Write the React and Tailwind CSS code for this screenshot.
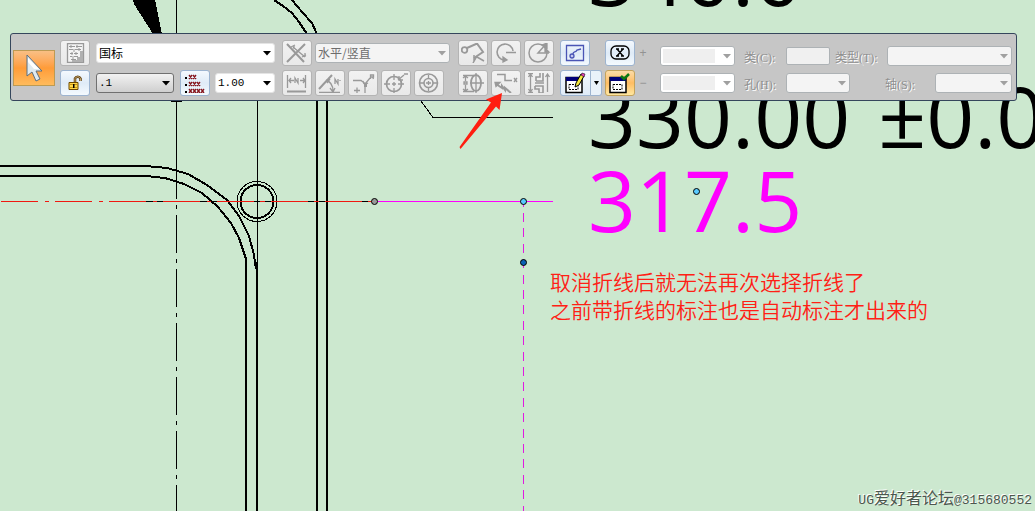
import React, { useState } from "react";

const cjk = "font-['Noto_Sans_CJK_SC',sans-serif]";

// one set of strokes per toolbar button, drawn on a 24x20 grid
function Icon({ children, color = "#999999" }) {
  return (
    <svg
      width="24"
      height="20"
      viewBox="0 0 24 20"
      fill="none"
      stroke={color}
      strokeWidth="1.3"
      aria-hidden="true"
    >
      {children}
    </svg>
  );
}

function ToolButton({ label, disabled, active, children }) {
  let look =
    "border-[#9db4d0] bg-linear-to-b from-[#f4f9fe] via-[#dfebf7] to-[#f4fafe]";
  if (disabled) {
    look = "border-[#b4b4b4] bg-linear-to-b from-[#f2f2f2] to-[#e9e9e9]";
  }
  if (active) {
    look =
      "border-[#c4a35c] bg-linear-to-b from-[#fbdca8] via-[#ffbd62] to-[#ffe7a0]";
  }
  return (
    <button
      type="button"
      aria-label={label}
      disabled={disabled}
      className={`flex h-[26px] w-[30px] shrink-0 items-center justify-center rounded-[3px] border ${look}`}
    >
      {children}
    </button>
  );
}

function Dropdown({ label, options = [""], disabled, filled, className, text }) {
  const [value, setValue] = useState(options[0]);
  let look = "border-[#e4e4e4] bg-white text-black";
  if (filled) {
    look =
      "border-[#707070] bg-linear-to-b from-[#f2f2f2] to-[#cfcfcf] text-black";
  }
  if (disabled) {
    look = "border-[#adb2b5] bg-[#f4f4f4] text-[#6d6d6d]";
  }
  return (
    <div className={`relative h-5 ${className}`}>
      <select
        aria-label={label}
        disabled={disabled}
        value={value}
        onChange={(e) => setValue(e.target.value)}
        className={`block h-full w-full appearance-none rounded-[3px] border pr-4 pl-0.5 opacity-100 ${look} ${text || ""}`}
      >
        {options.map((option) => (
          <option key={option}>{option}</option>
        ))}
      </select>
      <svg
        className="pointer-events-none absolute top-2 right-1"
        width="8"
        height="5"
        viewBox="0 0 8 5"
        fill={disabled ? "#a0a0a0" : "#000000"}
        aria-hidden="true"
      >
        <path d="M0 0h8L4 4.500z" />
      </svg>
    </div>
  );
}

// editable combo: grey entry inside a white frame
function ComboEntry({ label }) {
  return (
    <div className="flex h-5 w-[75px] items-center rounded-[3px] border border-[#adb2b5] bg-white pl-0.5">
      <input
        type="text"
        aria-label={label}
        disabled
        className="h-3.5 w-[52px] bg-[#efefef]"
      />
      <svg
        className="ml-2"
        width="8"
        height="5"
        viewBox="0 0 8 5"
        fill="#a0a0a0"
        aria-hidden="true"
      >
        <path d="M0 0h8L4 4.500z" />
      </svg>
    </div>
  );
}

function FieldLabel({ children }) {
  return (
    <span className="shrink-0 font-['Liberation_Serif','Noto_Sans_CJK_SC',serif] text-xs text-[#8f8f8f] [text-shadow:1px_1px_0_#ffffff]">
      {children}
    </span>
  );
}

function Drawing() {
  return (
    <svg
      className="absolute inset-0 h-full w-full"
      fill="none"
      stroke="#000000"
      shapeRendering="crispEdges"
      aria-hidden="true"
    >
      {/* arrow head and centre line */}
      <path d="M133 0h22l7 34h-9L134 4z" fill="#000000" stroke="none" />
      <path d="M176.500 0V199M176.500 205v4M171 101.500h11" />
      <path d="M176.500 215V2000" strokeDasharray="38 6 4 6" />
      <path d="M257.500 101V262" />

      {/* inner profile */}
      <g strokeWidth="2">
        <path d="M0 166H146L167 168L188 174L207 185L227 200L239 216L249 236L254 255L256 269" />
        <path d="M0 176H146L165 178L184 184L202 193L218 207L231 223L239 238L244 253L246 259V2000" />
        <path d="M257 262V2000" />
        <path d="M274 0L283 6L292 13L299 22L307 34M292 0L303 13L312 23L317 34" />
        <path d="M317 100V2000M327 100V2000" />
        <circle cx="257" cy="201.500" r="16.500" />
      </g>
      <circle cx="257" cy="201.500" r="20" />

      {/* horizontal axis */}
      <g stroke="#f01810">
        <path d="M1 201.500H109" strokeDasharray="37 7 4 6" />
        <path d="M109 201.500H372" />
      </g>
      <path d="M146 201.500h7M157 201.500h6M200 201.500h7M211 201.500h6M254 201.500h6M265 201.500h6M308 201.500h6M319 201.500h6M362 201.500h6" />

      {/* dimension lines */}
      <path d="M421 101L433 117.500H553" />
      <path d="M378 201.500H553" stroke="#ff00ff" />
      <path
        d="M523.500 213V2000"
        stroke="#e01be0"
        strokeDasharray="9 6.400"
      />
      <path d="M523.500 204v3M523.500 265v3" stroke="#e01be0" />
      <g shapeRendering="auto">
        <circle cx="374.500" cy="201.500" r="3" fill="#999999" />
        <circle cx="523.500" cy="201.500" r="3" fill="#59cbff" />
        <circle cx="523.500" cy="262.500" r="3" fill="#0a60b4" />
      </g>
    </svg>
  );
}

function Dimensions() {
  return (
    <div className="font-['Century_Gothic','Open_Sans',sans-serif] text-[84px] leading-[84px] whitespace-nowrap text-black">
      <div className="absolute top-[-68px] left-[588px]">340.0</div>
      <div className="absolute top-[74px] left-[588px] flex gap-7">
        <span>330.00</span>
        <span>±0.0</span>
      </div>
      <div className="absolute top-[158px] left-[588px] text-[#ff00ff]">
        317.5
      </div>
      <svg
        className="absolute top-[187px] left-[692px]"
        width="9"
        height="9"
        aria-hidden="true"
      >
        <circle cx="4.500" cy="4.500" r="3" fill="#59cbff" stroke="#000000" />
      </svg>
    </div>
  );
}

function Toolbar() {
  return (
    <div
      role="toolbar"
      aria-label="尺寸"
      className="relative flex items-center rounded-[3px] border border-[#35465c] bg-[#c6c6c6] pt-1.5 pr-1 pb-1 pl-0.5"
    >
      <button
        type="button"
        aria-label="选择"
        className="flex h-9 w-[42px] shrink-0 items-center justify-center border border-[#bd9a52] bg-linear-to-b from-[#f9bf84] via-[#ff9c38] to-[#ffbb5c]"
      >
        <svg width="18" height="28" viewBox="0 0 18 28" aria-hidden="true">
          <path
            d="M2 1v21l5-4 4 9 4-2-4-8h6z"
            fill="#dfeaf0"
            stroke="#5b6f80"
          />
          <path d="M3 4l11 11H9L3 8z" fill="#ffffff" />
        </svg>
      </button>

      <div className="ml-[5px] flex flex-col gap-1">
        <ToolButton label="样式" disabled>
          <Icon>
            <path d="M4.500.5h16v19h-16z" fill="#f4f4f4" />
            <path d="M17 8h3v11H9v-2h5v-3h3z" fill="#b0b0b0" stroke="none" />
            <path
              d="M6 3.500h6m1 0h6M6 6.500h4m2 0h6M7 10.500h3m1 0h4M7 13.500h2m2 0h4M8 16.500h5M8 2v3m6-3v3m-3 1v3m5-4v3M9 9v3m4-3v3m-3 1v4"
              strokeWidth="1"
            />
          </Icon>
        </ToolButton>
        <ToolButton label="解锁">
          <svg width="14" height="18" viewBox="0 0 14 18" aria-hidden="true">
            <path
              d="M7 8V4.500a3 3 0 0 1 5.500 0V7"
              fill="none"
              stroke="#5f3a05"
              strokeWidth="2.500"
            />
            <path
              d="M7 8V4.500a3 3 0 0 1 5.500 0V7"
              fill="none"
              stroke="#d9c48f"
              strokeWidth="0.800"
            />
            <path d="M1 8.500h9v7H1z" fill="#ffd84a" stroke="#6e4800" />
            <path d="M2 10.500h7M2 13.500h7" stroke="#c99512" />
            <path d="M5 10h1.500v4H5z" fill="#000000" />
          </svg>
        </ToolButton>
      </div>

      <div className="ml-1.5 flex w-[179px] shrink-0 flex-col gap-1">
        <div className="flex h-[26px] items-center">
          <Dropdown
            label="标准"
            options={["国标", "ISO", "ANSI"]}
            className="w-full"
            text={`${cjk} text-xs`}
          />
        </div>
        <div className="flex h-[26px] items-center justify-between">
          <Dropdown
            label="圆整"
            options={[".1", ".12", ".123"]}
            filled
            className="w-[78px]"
            text="font-['Liberation_Mono',monospace] text-[11px]"
          />
          <ToolButton label="精度">
            <svg
              width="22"
              height="20"
              viewBox="0 0 22 20"
              fill="none"
              aria-hidden="true"
            >
              <path
                d="M1 4h2v2H1zM1 11h2v2H1zM1 18h2v2H1z"
                fill="#000000"
              />
              <path
                d="M5 2l3 4m0-4l-3 4M9 2l3 4m0-4l-3 4M5 9l3 4m0-4l-3 4M9 9l3 4m0-4l-3 4M13 9l3 4m0-4l-3 4M5 16l3 4m0-4l-3 4M9 16l3 4m0-4l-3 4M13 16l3 4m0-4l-3 4M17 16l3 4m0-4l-3 4"
                stroke="#86141c"
                strokeWidth="1.300"
              />
            </svg>
          </ToolButton>
          <Dropdown
            label="比例"
            options={["1.00", "2.00"]}
            className="w-[60px]"
            text="font-['Liberation_Mono',monospace] text-[11px]"
          />
        </div>
      </div>

      <div className="ml-[7px] flex w-[168px] shrink-0 flex-col gap-1">
        <div className="flex items-center gap-[3px]">
          <ToolButton label="两点" disabled>
            <Icon>
              <path d="M2 1l17 18M2 19L20 1" strokeWidth="2" />
              <path d="M8 4l12 10M6 4l4-2M17 14l4-2M9 2v4M20 10v4" />
            </Icon>
          </ToolButton>
          <Dropdown
            label="方向"
            options={["水平/竖直"]}
            disabled
            className="flex-1"
            text={`${cjk} text-xs`}
          />
        </div>
        <div className="flex gap-[3px]">
          <ToolButton label="间距" disabled>
            <Icon>
              <path d="M2.500 2v13M20.500 2v13M4 7.500h5m6 0h5M6 5L4 7.500 6 10M18 5l2 2.500L18 10" />
              <path d="M10 10V5l3 5V5" />
              <path d="M2 18.500h19" strokeWidth="2" />
            </Icon>
          </ToolButton>
          <ToolButton label="角度" disabled>
            <Icon>
              <path d="M1 16L14 2" strokeWidth="2" />
              <path d="M1 19.500h21M8 7.500c5 1 7 5 7 11M8 7.500l4-1M9 10l3-4M12 15l3 4 2-4M17 11V6l3 5V6M22 7v1" />
            </Icon>
          </ToolButton>
          <ToolButton label="坐标尺寸" disabled>
            <Icon>
              <path d="M2 7.500h8l4 3M14 20v-9l5-6M3 17.500h6M6 14.500v6M13 11l-1-3M15 11l2-1" />
              <path d="M13 10h3v4h-3z" fill="#999999" stroke="none" />
              <path d="M19.500 6V2h3v2h-3m2 0l1 2" />
            </Icon>
          </ToolButton>
          <ToolButton label="直径" disabled>
            <Icon>
              <circle cx="10" cy="11" r="7.500" strokeWidth="1.700" />
              <path d="M0 11h6m2 0h4m2 0h6M10 1v6m0 2v4m0 2v5M14 7l6-5M15 3v4h4M20 1h4" />
            </Icon>
          </ToolButton>
          <ToolButton label="同心" disabled>
            <Icon>
              <circle cx="11.500" cy="10" r="9" strokeWidth="1.600" />
              <circle cx="11.500" cy="10" r="4.500" strokeWidth="1.600" />
              <path d="M3 10h4m2 0h5m2 0h4M11.500 2v4m0 2v4m0 2v4" />
            </Icon>
          </ToolButton>
        </div>
      </div>

      <div className="ml-2 grid shrink-0 grid-cols-3 gap-x-[3px] gap-y-1">
        <ToolButton label="引线" disabled>
          <Icon>
            <circle cx="3.500" cy="7" r="2.800" strokeWidth="1.800" />
            <path d="M6 5l10-4.500L22 9l-9 6" strokeWidth="2" />
            <path d="M16 13l-4 7M13 12v6M16 14l7 4" strokeWidth="1.500" />
          </Icon>
        </ToolButton>
        <ToolButton label="圆弧" disabled>
          <Icon>
            <path d="M22 9.500H12M19 8a8 8 0 1 0-9 9" strokeWidth="1.600" />
            <path d="M9 14l4 3-4 2z" fill="#999999" />
          </Icon>
        </ToolButton>
        <ToolButton label="半径" disabled>
          <Icon>
            <circle cx="11" cy="10" r="9" strokeWidth="1.500" />
            <path d="M22 10H11L19 1" strokeWidth="1.500" />
            <path d="M15 2l5-2v5zM18 5l4 4h-4z" fill="#999999" />
          </Icon>
        </ToolButton>
        <ToolButton label="对称直径" disabled>
          <Icon>
            <ellipse cx="15" cy="10" rx="5" ry="8" strokeWidth="1.800" />
            <path d="M2 2.500h11M2 18.500h11M9 10h14M15 0v20M4.500 3v5M4.500 12v6M2 5l2.500-2L7 5M2 16l2.500 2L7 16M3 9h3v2H3z" />
          </Icon>
        </ToolButton>
        <ToolButton label="折线" disabled>
          <Icon>
            <path d="M3 1.500h8v6h7" strokeWidth="1.500" />
            <path d="M20 5l3 4m0-4l-3 4" />
            <path d="M2 11l6 4v-2l3 4v-2l6 5" strokeWidth="2" />
            <path d="M1 9.500h5l-4 4z" fill="#999999" />
          </Icon>
        </ToolButton>
        <ToolButton label="尺寸边界" disabled>
          <Icon>
            <path d="M1 .5h5M1 19.500h5M3.500 1v18M1.500 4l2-3 2 3M1.500 16l2 3 2-3M8 10h9M20.500 1v18M18.500 4l2-3 2 3" />
            <path d="M9 8V4h4V0M16 0v8H9M8 13h8v7M8 13v3h4v4h4" strokeWidth="1.600" />
          </Icon>
        </ToolButton>
      </div>

      <div className="ml-1.5 flex w-[42px] shrink-0 flex-col gap-1">
        <ToolButton label="附着">
          <Icon color="#4a55b5">
            <path d="M3.500 2.500h17v15h-17z" />
            <circle cx="9" cy="13" r="2" fill="#c4c8f0" />
            <path d="M10 11c0-3 3-1 4-4l4-1" />
          </Icon>
        </ToolButton>
        <div className="flex">
          <button
            type="button"
            aria-label="前缀"
            className="flex h-[26px] w-[31px] items-center justify-center rounded-l-[3px] border border-[#9db4d0] bg-linear-to-b from-[#f4f9fe] to-[#dfebf7]"
          >
            <svg
              width="22"
              height="22"
              viewBox="0 0 22 22"
              fill="none"
              aria-hidden="true"
            >
              <path d="M1 5.500h16v15H1z" fill="#ffffff" stroke="#000000" strokeWidth="1.500" />
              <path d="M1 5h16v4H1z" fill="#000078" />
              <path d="M4 12.500h9v5H4z" stroke="#000000" strokeDasharray="2 1" />
              <path d="M10 15l1-4 5-9 3 2-5 9z" fill="#f5e83c" stroke="#000000" />
              <path d="M16 3l1-2 3 1-1 3z" fill="#e040b0" stroke="#000000" strokeWidth="0.500" />
            </svg>
          </button>
          <button
            type="button"
            aria-label="更多前缀"
            className="flex h-[26px] w-[11px] items-center justify-center rounded-r-[3px] border border-l-0 border-[#9db4d0] bg-[#e9f2fa]"
          >
            <svg width="5" height="4" viewBox="0 0 5 4" aria-hidden="true">
              <path d="M0 0h5L2.500 4z" />
            </svg>
          </button>
        </div>
      </div>

      <div className="ml-[3px] flex flex-col gap-1">
        <ToolButton label="公差">
          <Icon color="#000000">
            <rect x="3" y="3" width="18" height="13" rx="5" />
            <path d="M9 6l6 7m0-7l-6 7M8 6h3m2 0h3M8 13h3m2 0h3" />
          </Icon>
        </ToolButton>
        <ToolButton label="检验" active>
          <svg
            width="22"
            height="22"
            viewBox="0 0 22 22"
            fill="none"
            aria-hidden="true"
          >
            <path d="M1 5.500h16v15H1z" fill="#ffffff" stroke="#000000" strokeWidth="1.500" />
            <path d="M1 5h16v4H1z" fill="#000078" />
            <path d="M4 12.500h9v5H4z" stroke="#000000" strokeDasharray="2 1" />
            <path d="M12 4l3 3 5-5" stroke="#0a7a12" strokeWidth="2.500" />
          </svg>
        </ToolButton>
      </div>

      <div className="ml-1 flex w-2 shrink-0 flex-col gap-1 text-center font-['Liberation_Sans',sans-serif] text-xs leading-[26px] text-[#929292]">
        <span>+</span>
        <span>−</span>
      </div>

      <div className="ml-[13px] flex flex-col gap-[7px] pt-[3px]">
        <ComboEntry label="上偏差" />
        <ComboEntry label="下偏差" />
      </div>

      <div className="ml-[9px] flex min-w-0 flex-1 flex-col gap-[7px] pt-[3px]">
        <div className="flex h-5 items-center">
          <label className="flex items-center">
            <span className="w-[42px]">
              <FieldLabel>类(C):</FieldLabel>
            </span>
            <input
              type="text"
              disabled
              className="h-[18px] w-11 rounded-[2px] border border-[#adb2b5] bg-[#f0f0f0]"
            />
          </label>
          <label className="ml-[5px] flex min-w-0 flex-1 items-center">
            <span className="w-[52px] shrink-0">
              <FieldLabel>类型(T):</FieldLabel>
            </span>
            <Dropdown disabled className="min-w-0 flex-1" />
          </label>
        </div>
        <div className="flex h-5 items-center justify-between">
          <label className="flex items-center">
            <span className="w-[42px]">
              <FieldLabel>孔(H):</FieldLabel>
            </span>
            <Dropdown disabled className="w-16" />
          </label>
          <label className="flex items-center">
            <span className="w-[50px]">
              <FieldLabel>轴(S):</FieldLabel>
            </span>
            <Dropdown disabled className="w-[77px]" />
          </label>
        </div>
      </div>
    </div>
  );
}

function App() {
  return (
    <main className="relative min-h-screen overflow-hidden bg-[#cce8cf] pt-[33px] pr-[18px] pl-[10px]">
      <Drawing />
      <Dimensions />
      <Toolbar />

      <svg
        className="pointer-events-none absolute top-[92px] left-[458px]"
        width="46"
        height="58"
        viewBox="0 0 46 58"
        fill="#ff1e10"
        aria-hidden="true"
      >
        <path d="M44 1L28 7.500L33 10.500L1.500 55L2.500 57L38 14.500L41.500 18z" />
      </svg>

      <p
        className={`absolute top-[267px] left-[550px] text-[21px] leading-7 font-[350] whitespace-nowrap text-[#ff2015] ${cjk}`}
      >
        取消折线后就无法再次选择折线了
        <br />
        之前带折线的标注也是自动标注才出来的
      </p>

      <p className="absolute right-[3px] bottom-0 font-['Liberation_Mono','Noto_Sans_CJK_SC',monospace] text-[13px] leading-5 whitespace-nowrap text-[#4c564e] [text-shadow:-1px_-1px_0_#ffffff]">
        UG<span className="text-base leading-5">爱好者论坛</span>@315680552
      </p>
    </main>
  );
}

export default App;
